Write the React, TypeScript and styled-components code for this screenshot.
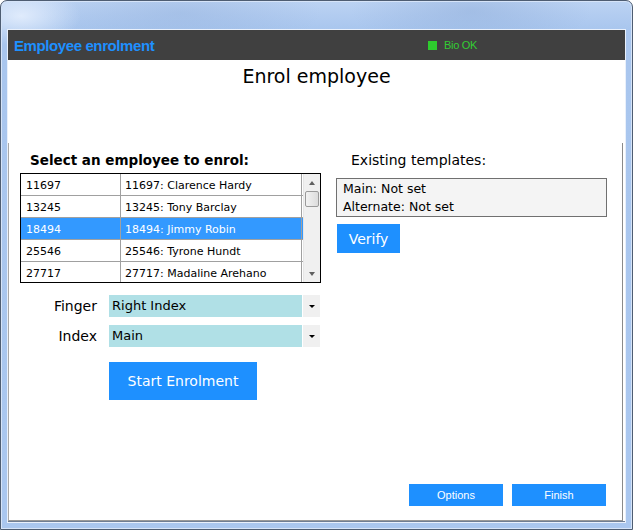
import * as React from "react";
import styled, { createGlobalStyle } from "styled-components";

const GlobalStyle = createGlobalStyle`
    html, body {
        margin: 0;
        padding: 0;
        background: #ffffff;
    }
    * {
        box-sizing: border-box;
    }
`;

const Window = styled.div`
    width: 633px;
    height: 530px;
    padding: 29px 7px 7px 7px;
    border: 1px solid #4e5d72;
    border-radius: 7px 7px 0 0;
    background:
        radial-gradient(ellipse 60px 30px at 20px 15px, rgba(235, 243, 255, 0.8), rgba(235, 243, 255, 0)),
        radial-gradient(ellipse 120px 40px at 470px 10px, rgba(140, 170, 215, 0.45), rgba(140, 170, 215, 0)),
        radial-gradient(ellipse 140px 40px at 180px 12px, rgba(140, 170, 215, 0.35), rgba(140, 170, 215, 0)),
        linear-gradient(to bottom, #bcd3f3 0px, #a9c6ee 28px, #aac7ef 100%);
    box-shadow: inset 0 0 0 1px #d6e4f8;
`;

const Client = styled.div`
    height: 100%;
    display: flex;
    flex-direction: column;
    background: #ffffff;
    border-bottom: 1px solid #6f7e94;
    box-shadow: 0 0 0 1px #e9f0fb;
`;

const HeaderBar = styled.div`
    height: 30px;
    background: #404040;
    display: flex;
    align-items: center;
    padding-left: 6px;
`;

const AppTitle = styled.div`
    width: 414px;
    font-family: "Liberation Sans", Arial, sans-serif;
    font-weight: bold;
    font-size: 15px;
    letter-spacing: -0.4px;
    color: #1e90ff;
`;

const Status = styled.div`
    display: flex;
    align-items: center;
    gap: 7px;
    font-family: "Liberation Sans", Arial, sans-serif;
    font-size: 11px;
    letter-spacing: -0.3px;
    color: #33cc33;
`;

const StatusLamp = styled.span`
    width: 9px;
    height: 9px;
    background: #2ecc2e;
`;

const PageTitle = styled.div`
    margin-top: 4px;
    height: 24px;
    line-height: 24px;
    text-align: center;
    font-family: "DejaVu Sans", Verdana, sans-serif;
    font-size: 19px;
    color: #000;
`;

const Panel = styled.div`
    margin-top: 55px;
    margin-right: 2px;
    flex: 1;
    display: flex;
    flex-direction: column;
    border-left: 1px solid #a8a8a8;
    border-right: 1px solid #8a8a8a;
    border-bottom: 1px solid #9a9a9a;
`;

const Columns = styled.div`
    flex: 1;
    display: grid;
    grid-template-columns: 301px 271px;
    column-gap: 15px;
    padding: 8px 0 0 11px;
`;

const Column = styled.div`
    display: flex;
    flex-direction: column;
`;

const SectionHeading = styled.div<{ $bold?: boolean; $indent?: number }>`
    height: 18px;
    line-height: 18px;
    padding-left: ${p => p.$indent ?? 0}px;
    font-family: "DejaVu Sans", Verdana, sans-serif;
    font-size: ${p => (p.$bold ? "13.5px" : "14px")};
    font-weight: ${p => (p.$bold ? "bold" : "normal")};
    color: #000;
`;

const ListBox = styled.div`
    margin-top: 4px;
    height: 110px;
    border: 1px solid #000;
    display: flex;
    overflow: hidden;
`;

const Rows = styled.div`
    width: 282px;
    display: flex;
    flex-direction: column;
`;

const Row = styled.div<{ $selected?: boolean }>`
    flex: none;
    height: 22px;
    display: grid;
    grid-template-columns: 100px 181px;
    border-bottom: 1px solid #a0a0a0;
    background: ${p => (p.$selected ? "#3399ff" : "#ffffff")};
    color: ${p => (p.$selected ? "#ffffff" : "#000000")};
    font-family: "DejaVu Sans", Verdana, sans-serif;
    font-size: 11px;
`;

const Cell = styled.div<{ $first?: boolean }>`
    line-height: 21px;
    padding-top: 1px;
    padding-left: ${p => (p.$first ? "5px" : "4px")};
    border-right: 1px solid #a0a0a0;
    white-space: nowrap;
    overflow: hidden;
`;

const ScrollBar = styled.div`
    width: 17px;
    display: flex;
    flex-direction: column;
    align-items: center;
    background: #f0f0f0;
    border-left: 1px solid #e6e6e6;
`;

const Arrow = styled.div<{ $down?: boolean }>`
    height: 17px;
    width: 17px;
    display: flex;
    align-items: center;
    justify-content: center;
    &::after {
        content: "";
        border-left: 3.5px solid transparent;
        border-right: 3.5px solid transparent;
        ${p =>
            p.$down
                ? "border-top: 4px solid #606060;"
                : "border-bottom: 4px solid #606060;"}
    }
`;

const Thumb = styled.div`
    width: 14px;
    height: 16px;
    border: 1px solid #9a9a9a;
    border-radius: 2px;
    background: linear-gradient(to right, #f2f2f2, #dcdcdc);
`;

const ScrollTrack = styled.div`
    flex: 1;
`;

const FieldRow = styled.div<{ $top: number }>`
    margin-top: ${p => p.$top}px;
    height: 22px;
    display: flex;
    align-items: center;
    gap: 12px;
`;

const FieldLabel = styled.div`
    width: 77px;
    text-align: right;
    font-family: "DejaVu Sans", Verdana, sans-serif;
    font-size: 14px;
    color: #000;
`;

const Combo = styled.div`
    width: 211px;
    height: 22px;
    display: flex;
    gap: 1px;
`;

const ComboValue = styled.div`
    flex: 1;
    background: #b0e0e6;
    padding-left: 3px;
    line-height: 22px;
    font-family: "DejaVu Sans", Verdana, sans-serif;
    font-size: 13px;
    color: #000;
`;

const ComboButton = styled.div`
    width: 17px;
    background: #f0f0f0;
    display: flex;
    align-items: center;
    justify-content: center;
    &::after {
        content: "";
        border-left: 3px solid transparent;
        border-right: 3px solid transparent;
        border-top: 3px solid #000;
    }
`;

const BlueButton = styled.button<{ $w: number; $h: number; $size: number; $small?: boolean }>`
    width: ${p => p.$w}px;
    height: ${p => p.$h}px;
    border: none;
    padding: 0;
    background: #1e90ff;
    color: #ffffff;
    font-family: ${p =>
        p.$small ? `"Liberation Sans", Arial, sans-serif` : `"DejaVu Sans", Verdana, sans-serif`};
    font-size: ${p => p.$size}px;
    cursor: pointer;
`;

const StartButton = styled(BlueButton)`
    margin: 15px 0 0 89px;
`;

const VerifyButton = styled(BlueButton)`
    margin: 7px 0 0 1px;
`;

const TemplateBox = styled.div`
    margin-top: 9px;
    height: 39px;
    border: 1px solid #707070;
    background: #f4f4f4;
    padding: 1px 0 0 6px;
    font-family: "DejaVu Sans", Verdana, sans-serif;
    font-size: 12.5px;
    line-height: 18px;
    color: #000;
`;

const Footer = styled.div`
    display: flex;
    justify-content: flex-end;
    gap: 9px;
    padding: 0 16px 14px 0;
`;

const employees = [
    { id: "11697", name: "Clarence Hardy" },
    { id: "13245", name: "Tony Barclay" },
    { id: "18494", name: "Jimmy Robin" },
    { id: "25546", name: "Tyrone Hundt" },
    { id: "27717", name: "Madaline Arehano" },
];

export default function App() {
    const [selected, setSelected] = React.useState("18494");

    return (
        <>
            <GlobalStyle />
            <Window>
                <Client>
                    <HeaderBar>
                        <AppTitle>Employee enrolment</AppTitle>
                        <Status>
                            <StatusLamp />
                            Bio OK
                        </Status>
                    </HeaderBar>
                    <PageTitle>Enrol employee</PageTitle>
                    <Panel>
                        <Columns>
                            <Column>
                                <SectionHeading $bold $indent={10}>
                                    Select an employee to enrol:
                                </SectionHeading>
                                <ListBox>
                                    <Rows>
                                        {employees.map(e => (
                                            <Row
                                                key={e.id}
                                                $selected={e.id === selected}
                                                onClick={() => setSelected(e.id)}
                                            >
                                                <Cell $first>{e.id}</Cell>
                                                <Cell>
                                                    {e.id}: {e.name}
                                                </Cell>
                                            </Row>
                                        ))}
                                    </Rows>
                                    <ScrollBar>
                                        <Arrow />
                                        <Thumb />
                                        <ScrollTrack />
                                        <Arrow $down />
                                    </ScrollBar>
                                </ListBox>
                                <FieldRow $top={12}>
                                    <FieldLabel>Finger</FieldLabel>
                                    <Combo>
                                        <ComboValue>Right Index</ComboValue>
                                        <ComboButton />
                                    </Combo>
                                </FieldRow>
                                <FieldRow $top={8}>
                                    <FieldLabel>Index</FieldLabel>
                                    <Combo>
                                        <ComboValue>Main</ComboValue>
                                        <ComboButton />
                                    </Combo>
                                </FieldRow>
                                <div>
                                    <StartButton $w={148} $h={38} $size={14}>
                                        Start Enrolment
                                    </StartButton>
                                </div>
                            </Column>
                            <Column>
                                <SectionHeading $indent={15}>Existing templates:</SectionHeading>
                                <TemplateBox>
                                    <div>Main: Not set</div>
                                    <div>Alternate: Not set</div>
                                </TemplateBox>
                                <div>
                                    <VerifyButton $w={63} $h={29} $size={14}>
                                        Verify
                                    </VerifyButton>
                                </div>
                            </Column>
                        </Columns>
                        <Footer>
                            <BlueButton $w={94} $h={22} $size={11} $small>
                                Options
                            </BlueButton>
                            <BlueButton $w={94} $h={22} $size={11} $small>
                                Finish
                            </BlueButton>
                        </Footer>
                    </Panel>
                </Client>
            </Window>
        </>
    );
}
